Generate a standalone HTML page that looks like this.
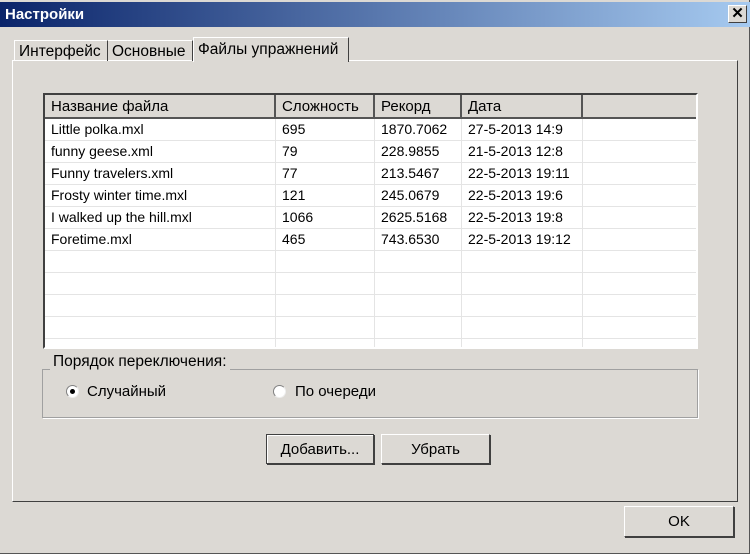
<!DOCTYPE html>
<html><head><meta charset="utf-8"><style>
*{box-sizing:border-box;margin:0;padding:0}
body{width:750px;height:554px;background:#dcd9d4;font-family:"Liberation Sans",sans-serif;font-size:15px;color:#000;position:relative;overflow:hidden;border-right:1px solid #555;border-bottom:1px solid #555}
.abs{position:absolute}
.title{left:0;top:2px;width:750px;height:25px;background:linear-gradient(90deg,#0a246a,#a6caf0);color:#fff;font-weight:bold;font-size:15px;padding:4px 5px}
.close{left:728px;top:5px;width:19px;height:18px;background:#dcd9d4;border:1px solid;border-color:#fff #404040 #404040 #fff;font-weight:bold;font-size:15px;text-align:center;line-height:15px}
.panel{left:12px;top:60px;width:726px;height:442px;border:1px solid;border-color:#fff #404040 #404040 #fff}
.tab{top:40px;height:21px;border:1px solid;border-bottom:none;border-color:#fff #404040 #404040 #fff;padding:2px 4px;font-size:15.5px}
.tbl{left:43px;top:93px;width:655px;height:256px;background:#fff;border:2px solid;border-color:#404040 #fff #fff #404040;overflow:hidden}
.hd{position:absolute;top:0;height:24px;background:#dcd9d4;border-right:2px solid #555;border-bottom:2px solid #555;padding:3px 6px;font-size:15px}
.row{position:absolute;left:0;width:655px;height:22px;border-bottom:1px solid #e4e4e4}
.c{position:absolute;top:0;height:22px;border-right:1px solid #e4e4e4;padding:2px 6px;font-size:14px}
.btn{background:#dcd9d4;border:1px solid;border-color:#fff #404040 #404040 #fff;box-shadow:1px 1px 0 #404040;text-align:center;font-size:15px}
.grp{left:42px;top:369px;width:656px;height:49px;border:1px solid #a0a0a0;box-shadow:1px 1px 0 #fff}
.radio{width:13px;height:13px;border-radius:50%;background:#fff;border:1px solid #888;border-color:#808080 #eee #eee #808080}
</style></head><body>
<div class="abs title">Настройки</div>
<div class="abs close">✕</div>
<div class="abs panel"></div>
<div class="abs tab" style="left:14px;width:94px">Интерфейс</div>
<div class="abs tab" style="left:108px;width:85px;border-left:none">Основные</div>
<div class="abs tab" style="left:193px;top:37px;height:25px;width:156px;background:#dcd9d4;padding-top:3px">Файлы упражнений</div>
<div class="abs tbl">
<div class="hd" style="left:0;width:231px">Название файла</div>
<div class="hd" style="left:231px;width:99px">Сложность</div>
<div class="hd" style="left:330px;width:87px">Рекорд</div>
<div class="hd" style="left:417px;width:121px">Дата</div>
<div class="hd" style="left:538px;width:120px;border-right:none"></div>
<div id="rows"></div>
</div>
<script>
var d=[["Little polka.mxl","695","1870.7062","27-5-2013 14:9"],["funny geese.xml","79","228.9855","21-5-2013 12:8"],["Funny travelers.xml","77","213.5467","22-5-2013 19:11"],["Frosty winter time.mxl","121","245.0679","22-5-2013 19:6"],["I walked up the hill.mxl","1066","2625.5168","22-5-2013 19:8"],["Foretime.mxl","465","743.6530","22-5-2013 19:12"],["","","",""],["","","",""],["","","",""],["","","",""],["","","",""]];
var L=[0,231,330,417,538],W=[231,99,87,121,120],h="";
d.forEach(function(r,i){h+='<div class="row" style="top:'+(24+i*22)+'px">';for(var j=0;j<5;j++)h+='<div class="c" style="left:'+L[j]+'px;width:'+W[j]+'px">'+(r[j]||"")+'</div>';h+='</div>'});
document.getElementById("rows").innerHTML=h;
</script>
<div class="abs grp"></div>
<div class="abs" style="left:50px;top:353px;background:#dcd9d4;padding:0 3px;font-size:15.5px">Порядок переключения:</div>
<div class="abs radio" style="left:66px;top:385px"><div style="width:5px;height:5px;border-radius:50%;background:#000;margin:3px"></div></div>
<div class="abs" style="left:87px;top:383px">Случайный</div>
<div class="abs radio" style="left:273px;top:385px"></div>
<div class="abs" style="left:295px;top:383px">По очереди</div>
<div class="abs btn" style="left:266px;top:434px;width:108px;height:30px;line-height:29px;border-color:#404040;box-shadow:inset 1px 1px 0 #fff,1px 1px 0 #404040">Добавить...</div>
<div class="abs btn" style="left:381px;top:434px;width:109px;height:30px;line-height:29px">Убрать</div>
<div class="abs btn" style="left:624px;top:506px;width:110px;height:31px;line-height:30px">OK</div>
</body></html>
